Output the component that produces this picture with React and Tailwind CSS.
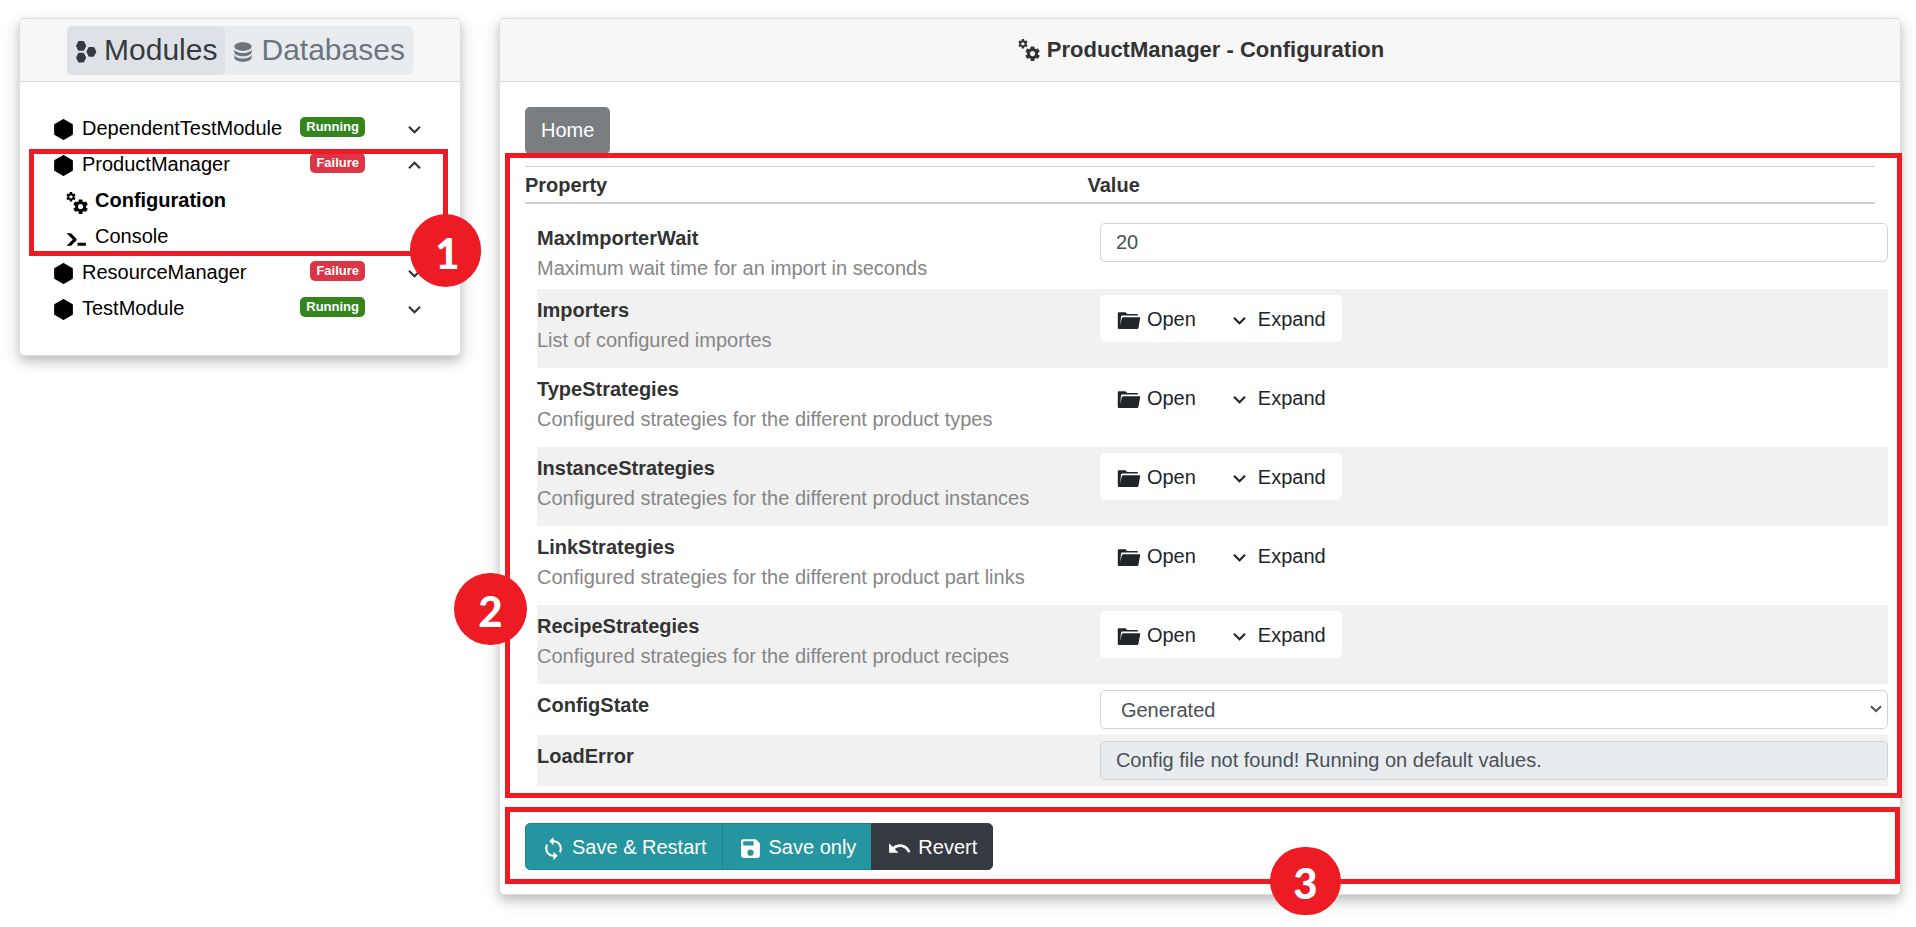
const PATHS = {
  hexagon:
    "M21,16.5C21,16.88 20.79,17.21 20.47,17.38L12.57,21.82C12.41,21.94 12.21,22 12,22C11.79,22 11.59,21.94 11.43,21.82L3.53,17.38C3.21,17.21 3,16.88 3,16.5V7.5C3,7.12 3.21,6.79 3.53,6.62L11.43,2.18C11.59,2.06 11.79,2 12,2C12.21,2 12.41,2.06 12.57,2.18L20.47,6.62C20.79,6.79 21,7.12 21,7.5V16.5Z",
  hexagons:
    "M5.4,1.9H9.6Q10,1.9 10.2,2.3L12,6.1Q12.2,6.5 12,6.9L10.2,10.5Q10,10.9 9.6,10.9H5.4Q5,10.9 4.8,10.5L3,6.9Q2.8,6.5 3,6.1L4.8,2.3Q5,1.9 5.4,1.9ZM5.4,12.7H9.6Q10,12.7 10.2,13.1L12,16.9Q12.2,17.3 12,17.7L10.2,21.3Q10,21.7 9.6,21.7H5.4Q5,21.7 4.8,21.3L3,17.7Q2.8,17.3 3,16.9L4.8,13.1Q5,12.7 5.4,12.7ZM14.9,7.3H18.9Q19.3,7.3 19.5,7.7L21.4,11.4Q21.6,11.8 21.4,12.2L19.5,15.9Q19.3,16.3 18.9,16.3H14.9Q14.5,16.3 14.3,15.9L12.5,12.2Q12.3,11.8 12.5,11.4L14.3,7.7Q14.5,7.3 14.9,7.3Z",
  database:
    "M12,3C7.58,3 4,4.79 4,7C4,9.21 7.58,11 12,11C16.42,11 20,9.21 20,7C20,4.79 16.42,3 12,3M4,9V12C4,14.21 7.58,16 12,16C16.42,16 20,14.21 20,12V9C20,11.21 16.42,13 12,13C7.58,13 4,11.21 4,9M4,14V17C4,19.21 7.58,21 12,21C16.42,21 20,19.21 20,17V14C20,16.21 16.42,18 12,18C7.58,18 4,16.21 4,14Z",
  down: "M7.41,8.58L12,13.17L16.59,8.58L18,10L12,16L6,10L7.41,8.58Z",
  up: "M7.41,15.41L12,10.83L16.59,15.41L18,14L12,8L6,14L7.41,15.41Z",
  save: "M15,9H5V5H15M12,19A3,3 0 0,1 9,16A3,3 0 0,1 12,13A3,3 0 0,1 15,16A3,3 0 0,1 12,19M17,3H5C3.89,3 3,3.9 3,5V19A2,2 0 0,0 5,21H19A2,2 0 0,0 21,19V7L17,3Z",
  sync: "M12,18A6,6 0 0,1 6,12C6,11 6.25,10.03 6.7,9.2L5.24,7.74C4.46,8.97 4,10.43 4,12A8,8 0 0,0 12,20V23L16,19L12,15M12,4V1L8,5L12,9V6A6,6 0 0,1 18,12C18,13 17.75,13.97 17.3,14.8L18.76,16.26C19.54,15.03 20,13.57 20,12A8,8 0 0,0 12,4Z",
  undo: "M12.5,8C9.85,8 7.45,9 5.6,10.6L2,7V16H11L7.38,12.38C8.77,11.22 10.54,10.5 12.5,10.5C16.04,10.5 19.05,12.81 20.1,16L22.47,15.22C21.08,11.03 17.15,8 12.5,8Z",
  console:
    "M13,19V16H21V19H13M8.5,13L2.47,7H6.71L11.67,11.95C12.25,12.54 12.25,13.5 11.67,14.07L6.74,19H2.5L8.5,13Z",
  cogs: "M15.9,18.45C17.25,18.45 18.35,17.35 18.35,16C18.35,14.65 17.25,13.55 15.9,13.55C14.54,13.55 13.45,14.65 13.45,16C13.45,17.35 14.54,18.45 15.9,18.45M21.1,16.68L22.58,17.84C22.71,17.95 22.75,18.13 22.66,18.29L21.26,20.71C21.17,20.86 21,20.92 20.83,20.86L19.09,20.16C18.73,20.44 18.33,20.67 17.91,20.85L17.64,22.7C17.62,22.87 17.47,23 17.3,23H14.5C14.32,23 14.18,22.87 14.15,22.7L13.89,20.85C13.46,20.67 13.07,20.44 12.71,20.16L10.96,20.86C10.81,20.92 10.62,20.86 10.54,20.71L9.14,18.29C9.05,18.13 9.09,17.95 9.22,17.84L10.7,16.68L10.65,16L10.7,15.31L9.22,14.16C9.09,14.05 9.05,13.86 9.14,13.71L10.54,11.29C10.62,11.13 10.81,11.07 10.96,11.13L12.71,11.84C13.07,11.56 13.46,11.32 13.89,11.15L14.15,9.29C14.18,9.13 14.32,9 14.5,9H17.3C17.47,9 17.62,9.13 17.64,9.29L17.91,11.15C18.33,11.32 18.73,11.56 19.09,11.84L20.83,11.13C21,11.07 21.17,11.13 21.26,11.29L22.66,13.71C22.75,13.86 22.71,14.05 22.58,14.16L21.1,15.31L21.15,16L21.1,16.68M6.69,8.07C7.56,8.07 8.26,7.37 8.26,6.5C8.26,5.63 7.56,4.92 6.69,4.92A1.58,1.58 0 0,0 5.11,6.5C5.11,7.37 5.82,8.07 6.69,8.07M10.03,6.94L11,7.68C11.07,7.75 11.09,7.87 11.03,7.97L10.13,9.53C10.08,9.63 9.96,9.67 9.86,9.63L8.74,9.18L8,9.62L7.81,10.81C7.79,10.92 7.7,11 7.59,11H5.79C5.67,11 5.58,10.92 5.56,10.81L5.4,9.62L4.64,9.18L3.52,9.63C3.41,9.67 3.3,9.63 3.24,9.53L2.34,7.97C2.28,7.87 2.31,7.75 2.39,7.68L3.34,6.94L3.31,6.5L3.34,6.06L2.39,5.32C2.31,5.25 2.28,5.13 2.34,5.03L3.24,3.47C3.3,3.37 3.41,3.33 3.52,3.37L4.63,3.82L5.4,3.38L5.56,2.19C5.58,2.08 5.67,2 5.79,2H7.59C7.7,2 7.79,2.08 7.81,2.19L8,3.38L8.74,3.82L9.86,3.37C9.96,3.33 10.08,3.37 10.13,3.47L11.03,5.03C11.09,5.13 11.07,5.25 11,5.32L10.03,6.06L10.06,6.5L10.03,6.94Z",
  folder:
    "M2.6,4H8.6C9.8,4 10.2,5.8 11.2,5.8H20C20.8,5.8 21.2,6.4 21.2,7.2H6.4C5.4,7.2 4.9,7.6 4.8,8.5L4,16.6L5.6,9.9C5.8,9.2 6.3,8.8 7,8.8H22.4C23,8.8 23.3,9.3 23.2,9.9L21.6,18.8C21.4,19.8 21,20.2 20.1,20.2H3.3C2.3,20.2 1.7,19.6 1.7,18.6V5C1.7,4.4 2,4 2.6,4Z",
};

function Icon({ name, className = "size-[25px]" }) {
  return (
    <svg viewBox="0 0 24 24" fill="currentColor" aria-hidden="true" className={`shrink-0 ${className}`}>
      <path d={PATHS[name]} />
    </svg>
  );
}

const BADGES = { Running: "bg-[#33851c]", Failure: "bg-[#dc3545]" };

function ModuleRow({ name, state, open = false }) {
  return (
    <div className="flex h-9 items-center pr-[33px] pl-[31px]">
      <a href="#module" className="flex h-full flex-1 items-center gap-[6px]">
        <Icon name="hexagon" className="mt-[3px] size-[25px]" />
        {name}
      </a>
      <span
        className={`mr-[37px] mb-[2px] rounded-[5px] px-[6px] text-[13px] leading-5 font-bold text-white ${BADGES[state]}`}
      >
        {state}
      </span>
      <button type="button" aria-label={`Toggle ${name}`} aria-expanded={open} className="mt-[3px] text-[#333]">
        <Icon name={open ? "up" : "down"} />
      </button>
    </div>
  );
}

function SubRow({ icon, active = false, children }) {
  return (
    <a href="#section" className={`flex h-9 items-center gap-[6px] pl-11 ${active ? "font-bold" : ""}`}>
      <Icon name={icon} className="mt-1 size-[25px]" />
      {children}
    </a>
  );
}

function Marker({ className, children }) {
  return (
    <span
      className={`absolute z-20 flex items-center justify-center rounded-full bg-[#ed1c24] pt-1 font-[Lato,sans-serif] text-[42px] leading-none font-black text-white ${className}`}
    >
      {children}
    </span>
  );
}

function Frame({ className }) {
  return <div className={`pointer-events-none absolute z-10 border-[5px] border-[#ed1c24] ${className}`} />;
}

const CARD =
  "rounded-[5px] border border-[#dcdcdc] bg-white shadow-[0_5px_10px_rgba(0,0,0,0.15),0_6px_18px_rgba(0,0,0,0.14)]";
const CARD_HEAD = "flex h-[63px] items-center justify-center rounded-t-[4px] border-b border-[#d8d8d8] bg-[#f7f7f7]";
const FIELD = "block h-[39px] w-full rounded-[5px] border border-[#ced4da] text-[#495057]";

function PropertyRow({ id, name, description, shaded = false, tall = false, children }) {
  return (
    <div className={`grid grid-cols-12 py-[6px] ${shaded ? "bg-[#f1f1f1]" : ""} ${tall ? "min-h-[79px]" : ""}`}>
      <div className="col-span-5">
        {id ? (
          <label htmlFor={id} className="block leading-[30px] font-bold">
            {name}
          </label>
        ) : (
          <div className="leading-[30px] font-bold">{name}</div>
        )}
        {description && <div className="leading-[30px] text-[#868686]">{description}</div>}
      </div>
      <div className="col-span-7">{children}</div>
    </div>
  );
}

function GroupButtons() {
  return (
    <div className="inline-flex h-[47px] rounded-[5px] bg-white text-[#212529]">
      <button type="button" className="flex items-center gap-[6px] pr-[15px] pl-4">
        <Icon name="folder" className="mt-1 size-[25px]" />
        Open
      </button>
      <button type="button" className="flex items-center gap-[6px] px-4">
        <Icon name="down" className="mt-[3px] size-[25px]" />
        Expand
      </button>
    </div>
  );
}

const GROUPS = [
  ["Importers", "List of configured importes"],
  ["TypeStrategies", "Configured strategies for the different product types"],
  ["InstanceStrategies", "Configured strategies for the different product instances"],
  ["LinkStrategies", "Configured strategies for the different product part links"],
  ["RecipeStrategies", "Configured strategies for the different product recipes"],
];

export default function App() {
  return (
    <div className="flex items-start gap-[38px] bg-white pt-[18px] pr-[15px] pb-8 pl-[19px] font-['Liberation_Sans',Arial,sans-serif] text-xl text-[#333]">
      <aside className={`w-[442px] shrink-0 ${CARD}`}>
        <div className={CARD_HEAD}>
          <nav className="flex h-[49px] rounded-[5px] bg-[#e9ecef] text-3xl">
            <a
              href="#modules"
              className="flex items-center gap-[5px] rounded-[5px] bg-[#dee2e6] pr-2 pl-[6px] text-[#343a40]"
            >
              <Icon name="hexagons" className="mt-[3px] size-[26px]" />
              Modules
            </a>
            <a href="#databases" className="flex items-center gap-[5px] pr-2 pl-[5px] text-[#6c757d]">
              <Icon name="database" className="mt-[3px] size-[26px]" />
              Databases
            </a>
          </nav>
        </div>
        <div className="pt-7 pb-[29px] text-black">
          <ModuleRow name="DependentTestModule" state="Running" />
          <div className="relative">
            <ModuleRow name="ProductManager" state="Failure" open />
            <SubRow icon="cogs" active>
              Configuration
            </SubRow>
            <SubRow icon="console">Console</SubRow>
            <Frame className="top-[3px] right-[12px] -bottom-[2px] left-[9px]" />
            <Marker className="-right-[21px] -bottom-[33px] h-[73px] w-[71px] pl-1">1</Marker>
          </div>
          <ModuleRow name="ResourceManager" state="Failure" />
          <ModuleRow name="TestModule" state="Running" />
        </div>
      </aside>

      <main className={`min-w-0 flex-1 ${CARD}`}>
        <div className={CARD_HEAD}>
          <h1 className="flex items-center gap-[6px] text-[22px] font-bold">
            <Icon name="cogs" />
            ProductManager - Configuration
          </h1>
        </div>
        <div className="pt-[25px] pr-3 pb-6 pl-[25px]">
          <button type="button" className="block h-[47px] rounded-[5px] bg-[#7b7e80] px-4 pb-[2px] text-white">
            Home
          </button>

          <section className="relative mt-3">
            <div className="mr-[13px] mb-[13px] grid h-[38px] grid-cols-12 items-center border-t border-b-2 border-[#d0d0d0] font-bold">
              <div className="col-span-5">Property</div>
              <div className="col-span-7">Value</div>
            </div>
            <div className="ml-3">
              <PropertyRow id="wait" name="MaxImporterWait" description="Maximum wait time for an import in seconds">
                <input id="wait" type="text" defaultValue="20" className={`bg-white px-[15px] ${FIELD}`} />
              </PropertyRow>
              {GROUPS.map(([name, description], i) => (
                <PropertyRow key={name} name={name} description={description} shaded={i % 2 === 0} tall>
                  <GroupButtons />
                </PropertyRow>
              ))}
              <PropertyRow id="state" name="ConfigState">
                <div className="relative">
                  <select id="state" className={`appearance-none bg-white pr-9 pl-5 ${FIELD}`}>
                    <option>Generated</option>
                  </select>
                  <svg
                    viewBox="0 0 12 8"
                    fill="none"
                    stroke="#495057"
                    strokeWidth="2"
                    aria-hidden="true"
                    className="pointer-events-none absolute top-[15px] right-[6px] h-2 w-3"
                  >
                    <path d="M1,1.2L6,6.2L11,1.2" />
                  </svg>
                </div>
              </PropertyRow>
              <PropertyRow id="error" name="LoadError" shaded>
                <input
                  id="error"
                  type="text"
                  readOnly
                  value="Config file not found! Running on default values."
                  className={`bg-[#e9ecef] px-[15px] ${FIELD}`}
                />
              </PropertyRow>
            </div>
            <Frame className="-top-[13px] -right-[14px] -bottom-3 -left-[20px]" />
            <Marker className="bottom-[141px] -left-[71px] h-[72px] w-[73px]">2</Marker>
          </section>

          <div className="relative mt-[37px] flex text-white">
            <button
              type="button"
              className="flex h-[47px] items-center gap-[6px] rounded-l-[5px] border border-[#1f838d] bg-[#2595a0] px-[15px]"
            >
              <Icon name="sync" className="mt-1 size-[25px]" />
              Save &amp; Restart
            </button>
            <button
              type="button"
              className="-ml-px flex h-[47px] items-center gap-[6px] border border-[#1f838d] bg-[#2595a0] px-[15px]"
            >
              <Icon name="save" className="mt-1 size-[25px]" />
              Save only
            </button>
            <button
              type="button"
              className="-ml-px flex h-[47px] items-center gap-[6px] rounded-r-[5px] border border-[#343a40] bg-[#343a40] px-[15px]"
            >
              <Icon name="undo" className="mt-1 size-[25px]" />
              Revert
            </button>
            <Frame className="-top-4 -right-3 -bottom-[14px] -left-[20px]" />
            <Marker className="-bottom-[45px] left-[745px] h-[68px] w-[71px]">3</Marker>
          </div>
        </div>
      </main>
    </div>
  );
}
